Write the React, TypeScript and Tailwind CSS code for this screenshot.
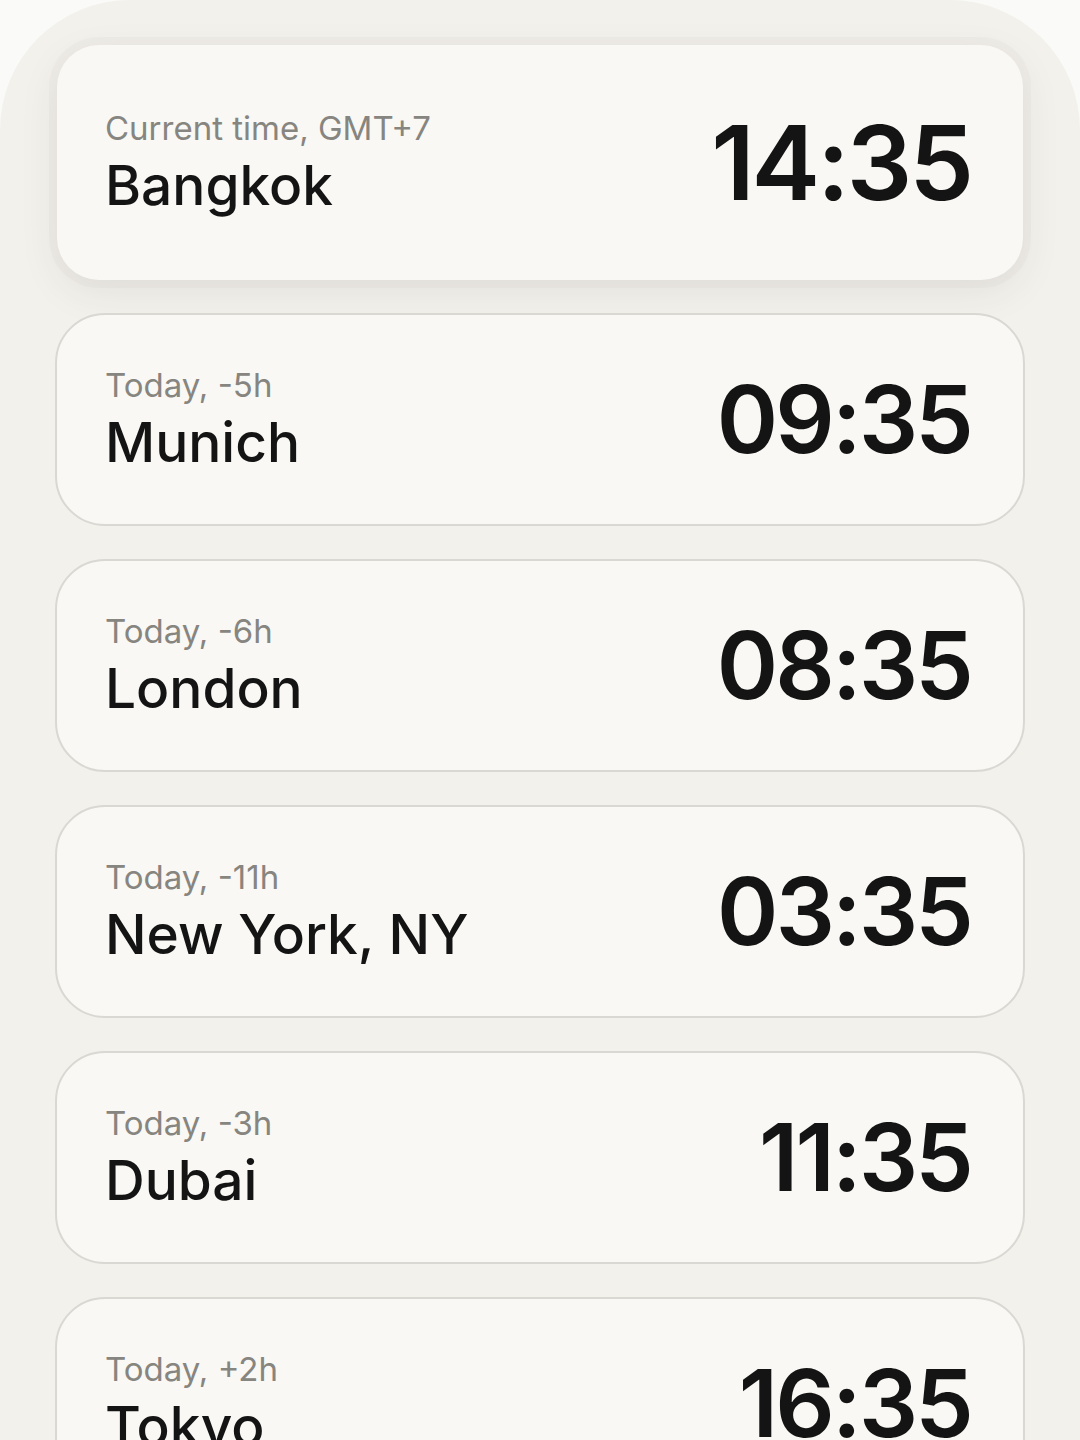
const cities = [
  { label: "Today, -5h", name: "Munich", time: "09:35" },
  { label: "Today, -6h", name: "London", time: "08:35" },
  { label: "Today, -11h", name: "New York, NY", time: "03:35" },
  { label: "Today, -3h", name: "Dubai", time: "11:35" },
  { label: "Today, +2h", name: "Tokyo", time: "16:35" },
]

function CityCard({ label, name, time }: { label: string; name: string; time: string }) {
  return (
    <div className="flex h-[213px] shrink-0 items-center justify-between rounded-[50px] border-2 border-[#d9d8d2] bg-[#f9f8f4] pl-[48px] pr-[52px]">
      <div className="flex flex-col">
        <span className="text-[33px] leading-[38px] text-[#878580]">{label}</span>
        <span className="mt-[6px] text-[55px] font-medium leading-[64px] text-[#141414]">{name}</span>
      </div>
      <span className="text-[93px] font-semibold leading-none tracking-[-0.03em] text-[#141414]">{time}</span>
    </div>
  )
}

export default function App() {
  return (
    <div className="h-[1440px] w-[1080px] overflow-hidden bg-[#fafaf8] font-['Inter','Noto_Sans',sans-serif]">
      <div className="flex min-h-full flex-col gap-[33px] rounded-t-[130px] bg-[#f2f1ec] px-[55px] pt-[45px]">
        <div className="mx-[2px] flex h-[235px] shrink-0 items-center justify-between rounded-[42px] bg-[#f9f8f4] pl-[48px] pr-[52px] shadow-[0_12px_40px_rgba(60,55,40,0.08),0_0_0_8px_rgba(235,234,228,0.6)]">
          <div className="flex flex-col">
            <span className="text-[33px] leading-[38px] text-[#878580]">Current time, GMT+7</span>
            <span className="mt-[6px] text-[55px] font-medium leading-[64px] text-[#141414]">Bangkok</span>
          </div>
          <span className="text-[103px] font-semibold leading-none tracking-[-0.03em] text-[#141414]">14:35</span>
        </div>
        {cities.map((c) => (
          <CityCard key={c.name} {...c} />
        ))}
      </div>
    </div>
  )
}
